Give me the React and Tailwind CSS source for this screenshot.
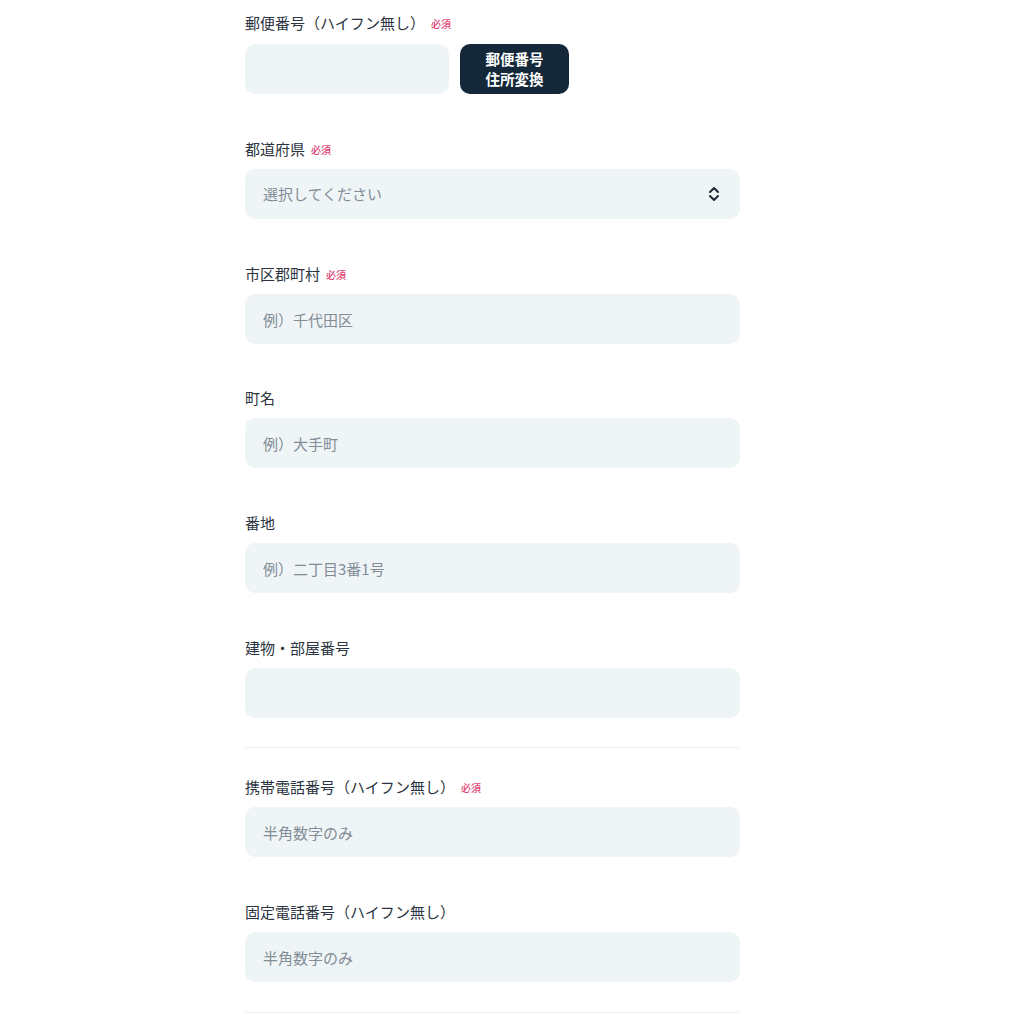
const font = { fontFamily: '"Noto Sans CJK JP", "Noto Sans", sans-serif' }

function Required() {
  return <span className="ml-[6px] text-[10px] font-medium text-[#e0436f]">必須</span>
}

function Label({ children, required, className = 'mb-[9px]' }) {
  return (
    <div className={`flex items-center h-[22px] text-[15px] text-[#2b3440] ${className}`}>
      <span>{children}</span>
      {required && <Required />}
    </div>
  )
}

function Input({ placeholder, className = '' }) {
  return (
    <input
      placeholder={placeholder}
      className={`h-[50px] rounded-[10px] bg-[#eff4f7] px-[18px] text-[15px] text-[#2b3440] placeholder:text-[#838d96] outline-none ${className}`}
      style={font}
    />
  )
}

function Field({ label, required, placeholder }) {
  return (
    <div>
      <Label required={required}>{label}</Label>
      <Input placeholder={placeholder} className="w-full" />
    </div>
  )
}

export default function App() {
  return (
    <div className="min-h-[1016px] bg-white" style={font}>
      <div className="w-[495px] ml-[245px] pt-3">
        {/* 郵便番号 */}
        <div>
          <Label required className="mb-[10px]">
            郵便番号（ハイフン無し）
          </Label>
          <div className="flex gap-[11px]">
            <Input className="w-[204px]" />
            <button className="w-[109px] h-[50px] rounded-[10px] bg-[#14283a] text-white text-[14.5px] font-bold leading-[20px]">
              郵便番号
              <br />
              住所変換
            </button>
          </div>
        </div>

        <div className="mt-[44px]">
          <Label required>都道府県</Label>
          <div className="relative h-[50px] rounded-[10px] bg-[#eff4f7] flex items-center px-[18px] text-[15px] text-[#838d96]">
            選択してください
            <svg className="absolute right-[20px] top-1/2 -translate-y-1/2" width="12" height="16" viewBox="0 0 12 16" fill="none" stroke="#1f2a36" strokeWidth="2" strokeLinecap="round" strokeLinejoin="round">
              <path d="M2 6 L6 2 L10 6" />
              <path d="M2 10 L6 14 L10 10" />
            </svg>
          </div>
        </div>

        <div className="mt-[44px]">
          <Field label="市区郡町村" required placeholder="例）千代田区" />
        </div>
        <div className="mt-[43px]">
          <Field label="町名" placeholder="例）大手町" />
        </div>
        <div className="mt-[44px]">
          <Field label="番地" placeholder="例）二丁目3番1号" />
        </div>
        <div className="mt-[44px]">
          <Field label="建物・部屋番号" />
        </div>

        <div className="mt-[29px] border-t border-[#edf0f2]" />

        <div className="mt-[28px]">
          <Field label="携帯電話番号（ハイフン無し）" required placeholder="半角数字のみ" />
        </div>
        <div className="mt-[44px]">
          <Field label="固定電話番号（ハイフン無し）" placeholder="半角数字のみ" />
        </div>

        <div className="mt-[30px] border-t border-[#edf0f2]" />
      </div>
    </div>
  )
}
